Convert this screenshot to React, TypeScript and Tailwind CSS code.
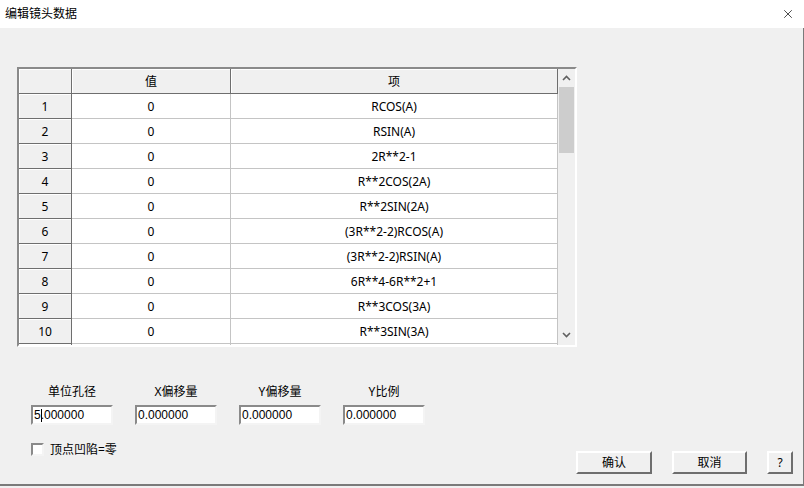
import { X } from "lucide-react";

const rows = [
  ["1", "0", "RCOS(A)"],
  ["2", "0", "RSIN(A)"],
  ["3", "0", "2R**2-1"],
  ["4", "0", "R**2COS(2A)"],
  ["5", "0", "R**2SIN(2A)"],
  ["6", "0", "(3R**2-2)RCOS(A)"],
  ["7", "0", "(3R**2-2)RSIN(A)"],
  ["8", "0", "6R**4-6R**2+1"],
  ["9", "0", "R**3COS(3A)"],
  ["10", "0", "R**3SIN(3A)"],
  ["", "", ""],
];

const fields = [
  { label: "单位孔径", value: "5.000000", caret: true },
  { label: "X偏移量", value: "0.000000" },
  { label: "Y偏移量", value: "0.000000" },
  { label: "Y比例", value: "0.000000" },
];

const font = "font-['Noto_Sans','Noto_Sans_CJK_SC',sans-serif]";

function Chevron({ up }: { up?: boolean }) {
  return (
    <svg width="9" height="6" viewBox="0 0 9 6" className="block">
      <path
        d={up ? "M1 5 L4.5 1.5 L8 5" : "M1 1 L4.5 4.5 L8 1"}
        fill="none"
        stroke="#606060"
        strokeWidth="1.6"
      />
    </svg>
  );
}

function LensTable() {
  return (
    <div className="flex w-[560px] h-[280px] border-2 border-t-[#8a8a8a] border-l-[#8a8a8a] border-b-white border-r-white bg-white">
      <div className="flex flex-col w-[539px] overflow-hidden">
        <div className="flex h-[25px] shrink-0 bg-[#f0f0f0] text-[12px] text-black">
          <div className="w-[53px] border-r border-b border-[#6e6e6e] shadow-[inset_1px_1px_0_#ffffff]" />
          <div className="w-[159px] border-r border-b border-[#6e6e6e] shadow-[inset_1px_1px_0_#ffffff] flex items-center justify-center pt-[2px]">
            值
          </div>
          <div className="w-[327px] border-r border-b border-[#6e6e6e] shadow-[inset_1px_1px_0_#ffffff] flex items-center justify-center pt-[2px]">
            项
          </div>
        </div>
        {rows.map(([n, v, item], i) => (
          <div key={i} className="flex h-[25px] shrink-0 text-[12px] text-black">
            <div className="w-[53px] bg-[#f0f0f0] border-r border-b border-[#6e6e6e] shadow-[inset_1px_1px_0_#ffffff] flex items-center justify-center pt-[2px]">
              {n}
            </div>
            <div className="w-[159px] border-r border-b border-[#c4c4c4] flex items-center justify-center pt-[2px]">
              {v}
            </div>
            <div className="w-[327px] border-r border-b border-[#c4c4c4] flex items-center justify-center pt-[2px]">
              {item}
            </div>
          </div>
        ))}
      </div>
      <div className="w-[17px] bg-[#f0f0f0] flex flex-col items-center">
        <div className="h-[18px] flex items-center justify-center">
          <Chevron up />
        </div>
        <div className="w-[15px] h-[66px] bg-[#cdcdcd]" />
        <div className="flex-1" />
        <div className="h-[18px] flex items-center justify-center mb-[1px]">
          <Chevron />
        </div>
      </div>
    </div>
  );
}

function Sunken({ className, children }: { className: string; children?: React.ReactNode }) {
  return (
    <div
      className={`border-2 border-t-[#8a8a8a] border-l-[#8a8a8a] border-b-[#f4f4f4] border-r-[#f4f4f4] bg-white ${className}`}
    >
      {children}
    </div>
  );
}

function Button({ label, w }: { label: string; w: string }) {
  return (
    <button
      className={`${w} h-[23px] bg-[#f0f0f0] border-2 border-t-white border-l-white border-b-[#6e6e6e] border-r-[#6e6e6e] text-[12px] text-black flex items-center justify-center`}
    >
      {label}
    </button>
  );
}

export default function App() {
  return (
    <div className={`w-[804px] h-[488px] bg-[#f0f0f0] ${font} text-black`}>
      <div className="h-[28px] bg-white flex items-center justify-between pl-[5px] pr-[9px]">
        <span className="text-[12px]">编辑镜头数据</span>
        <X size={14} strokeWidth={1.2} className="text-black" />
      </div>
      <div className="h-[458px] flex flex-col border-r border-b-2 border-[#7a7a7a]">
        <div className="pt-[39px] pl-[17px]">
          <LensTable />
        </div>
        <div className="mt-[37px] flex items-end justify-between pr-[10px]">
          <div className="flex flex-col pl-[31px] mb-[18px]">
            <div className="flex gap-[22px]">
              {fields.map((f) => (
                <div key={f.label} className="flex flex-col items-center gap-[5px]">
                  <span className="h-[16px] leading-[16px] text-[12px]">{f.label}</span>
                  <Sunken className="w-[82px] h-[20px] flex items-center pl-[1px]">
                    {f.caret ? (
                      <span className="text-[12px] font-['Liberation_Sans',sans-serif] leading-none flex items-center">
                        5<span className="w-px h-[13px] bg-black -mr-[1px]" />
                        .000000
                      </span>
                    ) : (
                      <span className="text-[12px] font-['Liberation_Sans',sans-serif] leading-none">
                        {f.value}
                      </span>
                    )}
                  </Sunken>
                </div>
              ))}
            </div>
            <div className="flex items-center gap-[6px] mt-[18px] h-[13px]">
              <Sunken className="w-[13px] h-[13px]" />
              <span className="text-[12px] leading-none">顶点凹陷=零</span>
            </div>
          </div>
          <div className="flex gap-[20px]">
            <Button label="确认" w="w-[76px]" />
            <Button label="取消" w="w-[75px]" />
            <Button label="?" w="w-[26px]" />
          </div>
        </div>
      </div>
    </div>
  );
}
